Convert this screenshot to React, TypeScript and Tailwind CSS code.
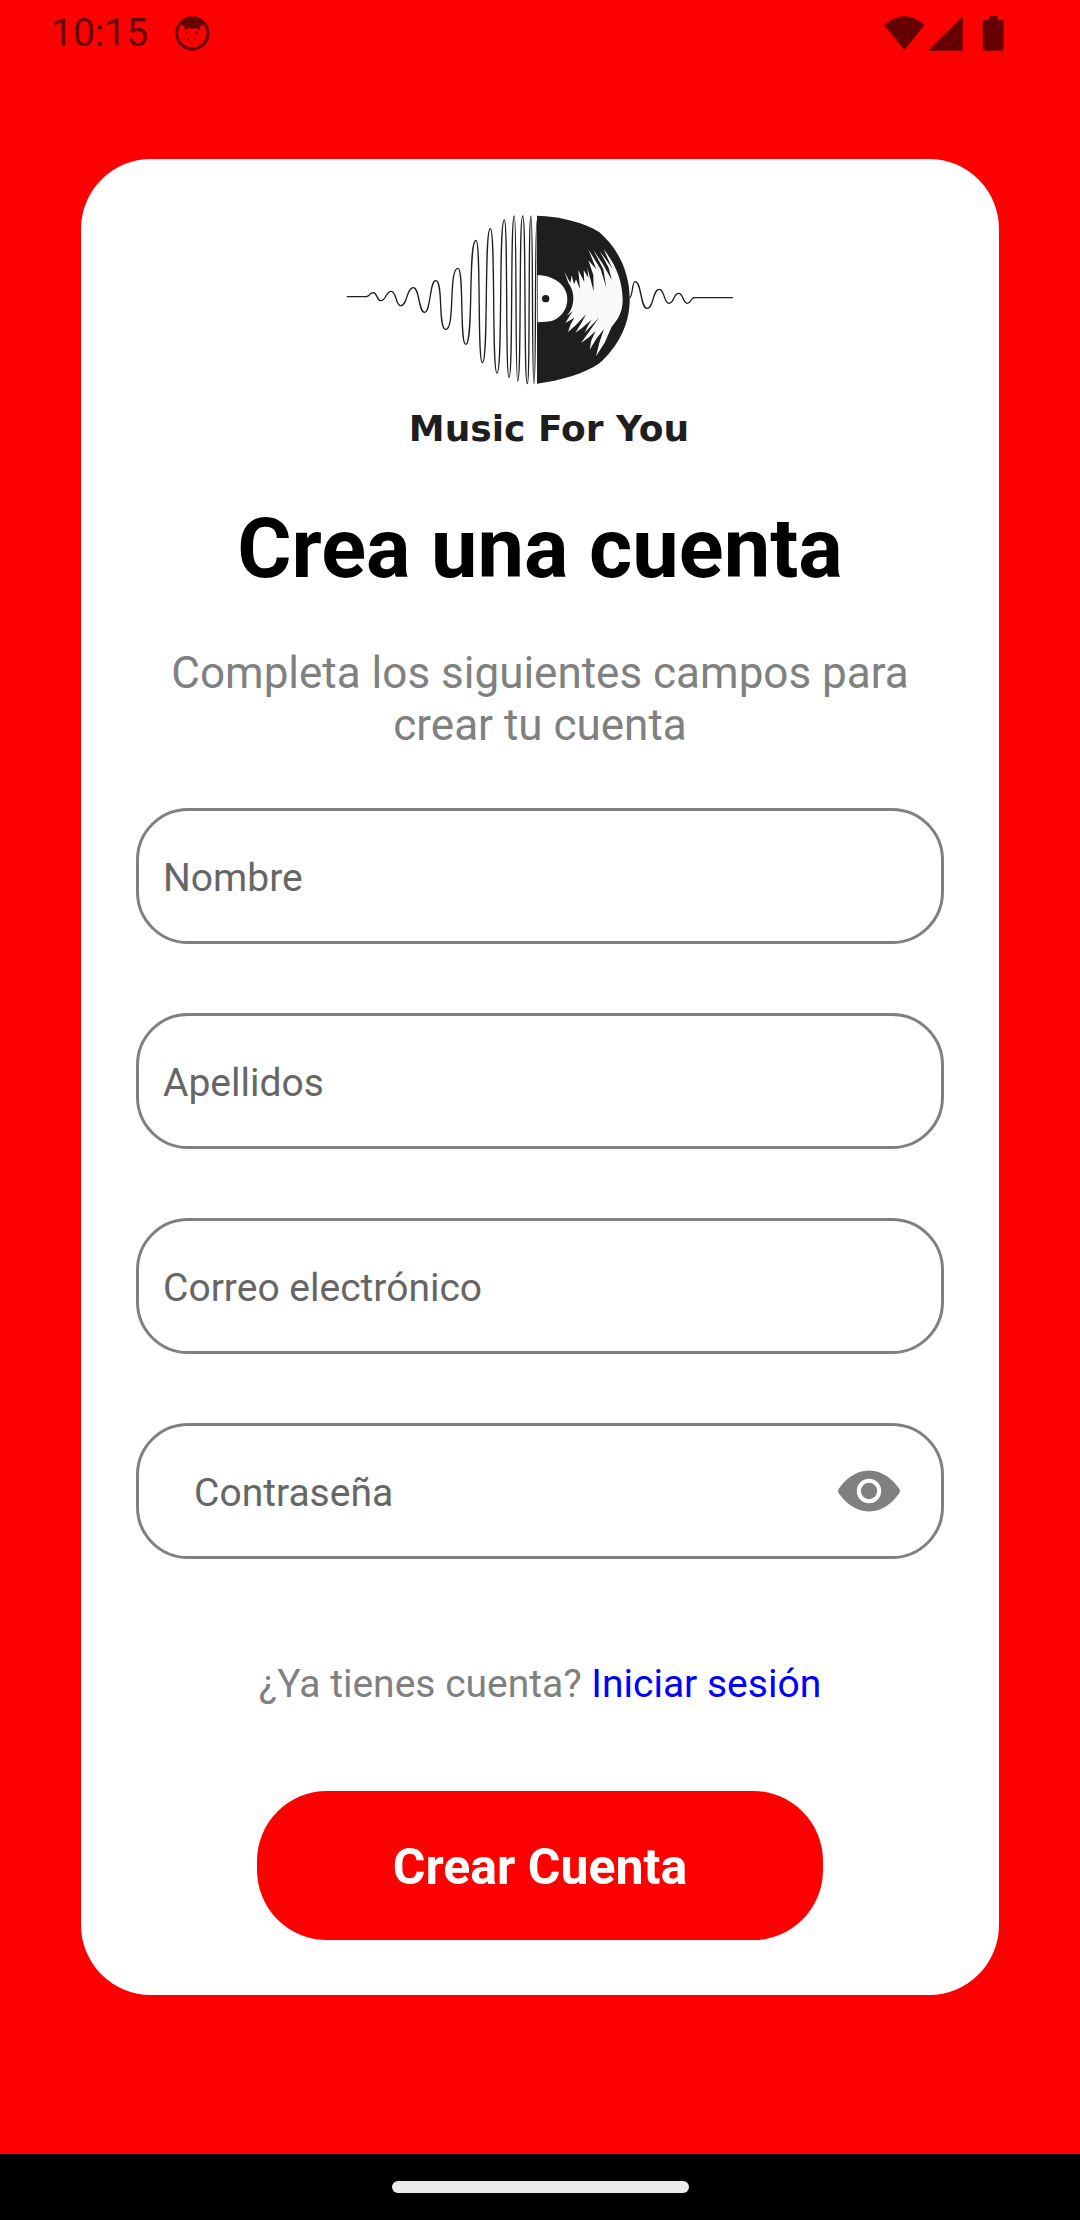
import { useState, type ReactNode } from "react";

type Point = [number, number];

const LEFT_WAVE: Point[] = [
  [108, 287], [130, 275], [152, 299], [184, 271], [212, 314], [250, 260], [284, 334],
  [317, 239], [347, 385], [384, 202], [407, 430], [438, 118], [457, 485], [481, 83],
  [501, 516], [523, 57], [537, 529], [553, 45], [563, 540], [578, 45], [592, 548],
  [603, 45], [612, 548], [621, 60],
];

const RIGHT_WAVE: Point[] = [
  [899, 290], [915, 242], [951, 322], [988, 265], [1017, 307], [1046, 277], [1072, 307], [1093, 290],
];

function wave(points: Point[]) {
  return points
    .map(([x, y], i) => {
      if (i === 0) return `M${x},${y}`;
      const [px, py] = points[i - 1];
      const d = (x - px) * (Math.abs(y - py) > 120 ? 0.8 : 0.55);
      return `C${px + d},${py} ${x - d},${y} ${x},${y}`;
    })
    .join(" ");
}

function Logo() {
  return (
    <svg viewBox="0 0 1260 600" className="h-[200px] w-[420px]" aria-hidden="true">
      <g fill="none" stroke="#1e1e1e" strokeWidth="4" strokeLinecap="round" strokeLinejoin="round">
        <path d="M52,287 H108" />
        <path d={wave(LEFT_WAVE)} />
        <path d={wave(RIGHT_WAVE)} />
        <path d="M1093,290 H1207" />
      </g>
      <path
        fill="#1e1e1e"
        d="M621,44 C690,47 765,64 808,94 C862,140 899,210 899,296 C899,375 860,440 808,487 C765,517 690,540 621,548 Z"
      />
      <path fill="#fff" d="M623,222 C675,224 712,255 712,294 C712,332 683,362 648,362 L623,364 Z" />
      <circle cx="647" cy="293" r="11" fill="#1e1e1e" />
      <path
        fill="#fafafa"
        d="M703,212 L721,246 L725,223 L732,250 L738,235 L750,264 L745,207 L763,244 L761,207 L775,230 L772,200 L791,271 L790,222 L775,178 L799,205 L775,145 L812,205 L829,260 L820,205 L790,147 L818,188 L845,236 L836,200 L809,150 L838,190 L848,205 L821,145 C857,190 878,240 878,298 C878,335 862,358 845,377 L824,425 L798,466 L808,425 L822,384 L800,412 L779,446 L784,418 L797,390 L775,410 L753,426 L775,395 L807,350 L780,378 L764,395 L775,372 L785,356 L755,382 L736,395 L752,370 L768,340 L738,372 L714,393 L722,370 L733,350 L706,366 L728,330 L710,345 C736,315 736,275 715,245 Z"
      />
    </svg>
  );
}

function StatusBar() {
  return (
    <header className="flex h-[66px] items-center justify-between pl-[51px] pr-[76px] text-[#660000]">
      <div className="flex items-center gap-[27px]">
        <span className="text-[39px] leading-[66px]">10:15</span>
        <svg viewBox="0 0 105 105" className="size-[35px]" fill="currentColor" aria-hidden="true">
          <circle cx="52" cy="52" r="47" fill="none" stroke="currentColor" strokeWidth="9" />
          <path d="M18,22 Q52,-8 86,22 L84,28 L76,30 L74,46 L69,38 L58,36 L52,40 L46,36 L35,38 L30,46 L28,30 L20,28 Z" />
          <circle cx="34" cy="52" r="3" />
          <circle cx="64" cy="49" r="4" />
          <circle cx="27" cy="65" r="2" />
          <circle cx="46" cy="58" r="2" />
          <circle cx="39" cy="70" r="3" />
          <circle cx="60" cy="70" r="3" />
          <circle cx="75" cy="63" r="2" />
          <circle cx="50" cy="82" r="3" />
        </svg>
      </div>
      <svg viewBox="0 0 360 105" className="h-[35px] w-[120px]" fill="currentColor" aria-hidden="true">
        <path d="M0,27 Q61,-26 122,27 L61,102 Z" />
        <path d="M132,104 L236,1 V104 Z" />
        <path d="M315,0 H341 V12 H353 Q359,12 359,18 V98 Q359,104 353,104 H302 Q296,104 296,98 V18 Q296,12 302,12 H315 Z" />
      </svg>
    </header>
  );
}

interface FieldProps {
  id: string;
  label: string;
  type?: string;
  inset?: string;
  children?: ReactNode;
}

function Field({ id, label, type = "text", inset = "pl-[24px]", children }: FieldProps) {
  return (
    <div className="flex h-[136px] items-center rounded-[52px] border-3 border-[#808080] pr-[38px]">
      <input
        id={id}
        type={type}
        aria-label={label}
        placeholder={label}
        className={`h-full min-w-0 flex-1 bg-transparent pt-[3px] text-[39px] text-black outline-none placeholder:text-[#666666] ${inset}`}
      />
      {children}
    </div>
  );
}

export default function App() {
  const [visible, setVisible] = useState(false);
  return (
    <div className="flex min-h-screen flex-col bg-[#ff0000] font-['Roboto',sans-serif]">
      <StatusBar />
      <main className="flex flex-1 flex-col justify-center px-[81px] pb-[66px]">
        <form
          className="flex flex-col items-center rounded-[70px] bg-white px-[55px] pb-[55px] pt-[42px]"
          onSubmit={(e) => e.preventDefault()}
        >
          <Logo />
          <p className="pl-[18px] font-['DejaVu_Sans',sans-serif] text-[36px] font-bold leading-[56px] text-[#1e1e1e]">
            Music For You
          </p>
          <h1 className="mt-[44px] text-[83px] font-bold leading-[96px] text-black">Crea una cuenta</h1>
          <p className="mt-[50px] text-center text-[44px] leading-[52px] text-[#808080]">
            Completa los siguientes campos para crear tu cuenta
          </p>
          <div className="mt-[57px] flex w-full flex-col gap-[69px]">
            <Field id="nombre" label="Nombre" />
            <Field id="apellidos" label="Apellidos" />
            <Field id="correo" label="Correo electrónico" type="email" />
            <Field id="contrasena" label="Contraseña" type={visible ? "text" : "password"} inset="pl-[55px]">
              <button type="button" aria-label="Mostrar contraseña" onClick={() => setVisible(!visible)}>
                <svg viewBox="1 1 22 22" className="size-[68px]" fill="#808080" aria-hidden="true">
                  <path d="M12 5.400C7.500 5.400 4.300 8.400 2.200 11.300Q1.700 12 2.200 12.700C4.300 15.600 7.500 18.600 12 18.600S19.700 15.600 21.800 12.700Q22.300 12 21.800 11.300C19.700 8.400 16.500 5.400 12 5.400Z" />
                  <circle cx="12" cy="12" r="3.300" stroke="#fff" strokeWidth="1.300" />
                </svg>
              </button>
            </Field>
          </div>
          <p className="mt-[102px] text-[39px] leading-[46px] text-[#808080]">
            ¿Ya tienes cuenta? <a href="#" className="text-[#0000ff]">Iniciar sesión</a>
          </p>
          <button type="submit" className="mt-[84px] h-[149px] w-[566px] max-w-full rounded-[70px] bg-[#ff0000] pt-[3px] text-[50px] font-bold text-white">
            Crear Cuenta
          </button>
        </form>
      </main>
      <footer className="flex h-[66px] items-center justify-center bg-black">
        <div className="h-[12px] w-[297px] rounded-full bg-[#ebebeb]" />
      </footer>
    </div>
  );
}
